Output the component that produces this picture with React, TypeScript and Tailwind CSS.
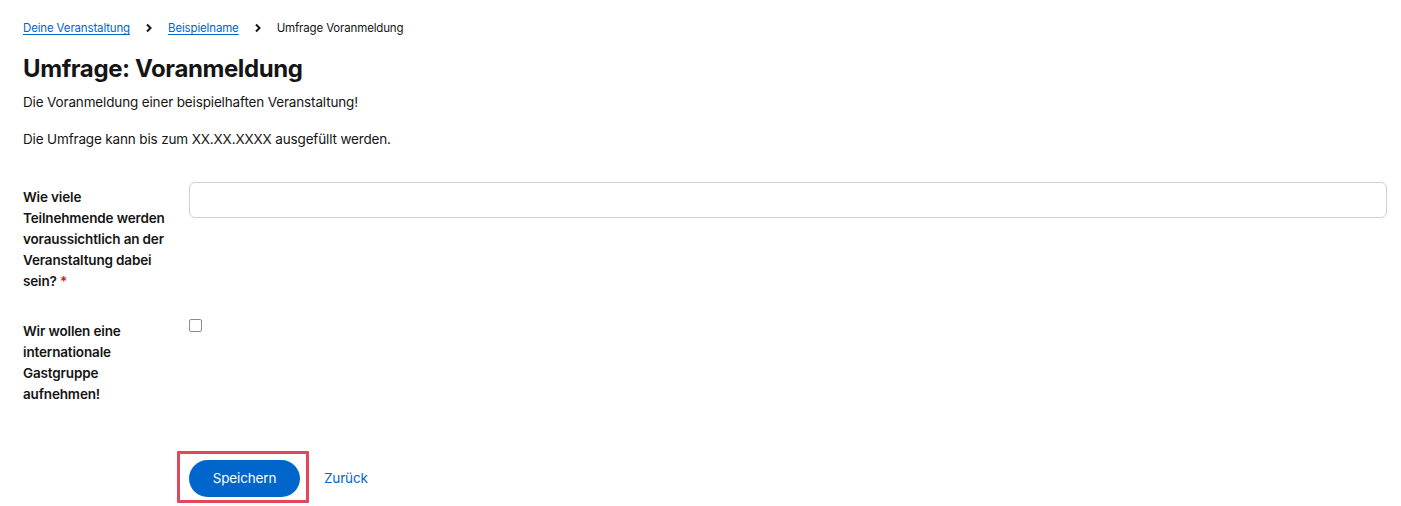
import React from "react";

function Chevron() {
  return (
    <svg width="8" height="10" viewBox="0 0 8 10" className="mx-[15px]" aria-hidden>
      <path d="M2 1.5 L5.5 5 L2 8.5" fill="none" stroke="#151515" strokeWidth="2" />
    </svg>
  );
}

export default function App() {
  return (
    <div
      className="min-h-[506px] bg-white text-[#151515] pl-[23px] pr-[14px] pt-[20px]"
      style={{ fontFamily: "Inter, 'Open Sans', sans-serif" }}
    >
      <nav className="flex items-center text-[11.5px] leading-[16px] tracking-[-0.15px]">
        <a href="#" className="text-[#0066cc] underline underline-offset-2">Deine Veranstaltung</a>
        <Chevron />
        <a href="#" className="text-[#0066cc] underline underline-offset-2">Beispielname</a>
        <Chevron />
        <span>Umfrage Voranmeldung</span>
      </nav>

      <h1 className="mt-[18px] text-[24px] leading-[30px] font-bold tracking-[-0.4px]">Umfrage: Voranmeldung</h1>

      <p className="mt-[8px] text-[13.5px] leading-[21px] tracking-[-0.15px]">Die Voranmeldung einer beispielhaften Veranstaltung!</p>
      <p className="mt-[16px] text-[13.5px] leading-[21px] tracking-[-0.15px]">Die Umfrage kann bis zum XX.XX.XXXX ausgefüllt werden.</p>

      <div className="mt-[32px] grid grid-cols-[150px_1fr] gap-x-[16px] gap-y-[24px]">
        <label className="pt-[5px] text-[13.5px] leading-[21px] font-semibold tracking-[-0.15px]">
          Wie viele Teilnehmende werden voraussichtlich an der Veranstaltung dabei sein?{" "}
          <span className="text-[#c9190b]">*</span>
        </label>
        <div>
          <input
            type="text"
            className="w-full h-[36px] rounded-[6px] border border-[#d2d2d2] bg-white px-2 outline-none"
          />
        </div>

        <label className="pt-[5px] text-[13.5px] leading-[21px] font-semibold tracking-[-0.15px]">
          Wir wollen eine internationale Gastgruppe aufnehmen!
        </label>
        <div className="pt-[3px]">
          <div className="w-[13px] h-[13px] rounded-[2px] border border-[#8a8d90] bg-white" />
        </div>

        <div className="mt-[31px]" />
        <div className="mt-[31px] flex items-center gap-[24px]">
          <div className="relative">
            <div className="absolute left-[-12px] top-[-9px] w-[132px] h-[52px] border-[3px] border-[#e5475a] rounded-[1px]" />
            <button className="relative h-[37px] w-[111px] rounded-full bg-[#0066cc] text-white text-[13.5px] tracking-[-0.15px]">
              Speichern
            </button>
          </div>
          <a href="#" className="text-[13.5px] tracking-[-0.15px] text-[#0066cc]">Zurück</a>
        </div>
      </div>
    </div>
  );
}
